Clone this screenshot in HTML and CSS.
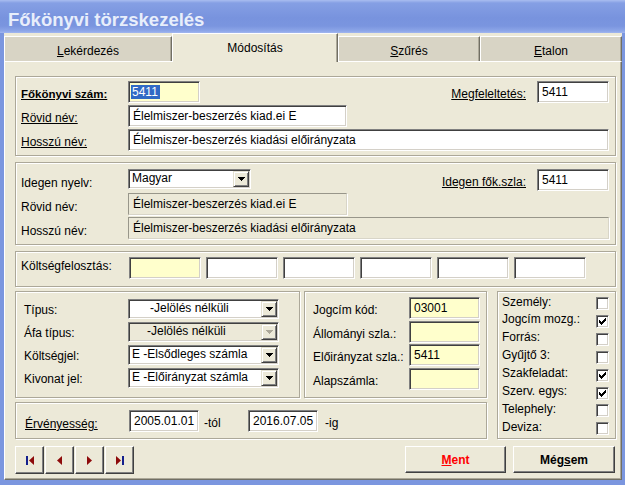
FILE: index.html
```html
<!DOCTYPE html>
<html>
<head>
<meta charset="utf-8">
<link rel="stylesheet" href="styles.css">
</head>
<body>
<div class="window">
  <div class="titlebar">Főkönyvi törzskezelés</div>
  <div class="client">
    <div class="tabs">
      <div class="tab t1"><u>L</u>ekérdezés</div>
      <div class="tab t2 active">Módosítás</div>
      <div class="tab t3"><u>S</u>zűrés</div>
      <div class="tab t4"><u>E</u>talon</div>
    </div>
    <div class="panel">
      <div class="group g1">
        <div class="row">
          <span class="lbl bold u">Főkönyvi szám:</span>
          <div class="field yellow w72"><span class="selected">5411</span></div>
          <span class="fill"></span>
          <span class="rlbl u">Megfeleltetés:</span>
          <div class="field w72">5411</div>
        </div>
        <div class="row">
          <span class="lbl u">Rövid név:</span>
          <div class="field w219">Élelmiszer-beszerzés kiad.ei E</div>
        </div>
        <div class="row">
          <span class="lbl u">Hosszú név:</span>
          <div class="field grow">Élelmiszer-beszerzés kiadási előirányzata</div>
        </div>
      </div>

      <div class="group g2">
        <div class="row">
          <span class="lbl lo">Idegen nyelv:</span>
          <div class="combo w123"><span class="ctext">Magyar</span><span class="cbtn"><svg width="7" height="4" viewBox="0 0 7 4"><path d="M0 0H7V1H6V2H5V3H4V4H3V3H2V2H1V1H0Z" fill="#000"/></svg></span></div>
          <span class="fill"></span>
          <span class="rlbl u">Idegen fők.szla:</span>
          <div class="field w72">5411</div>
        </div>
        <div class="row">
          <span class="lbl lo">Rövid név:</span>
          <div class="field disabled w219">Élelmiszer-beszerzés kiad.ei E</div>
        </div>
        <div class="row">
          <span class="lbl lo">Hosszú név:</span>
          <div class="field disabled grow">Élelmiszer-beszerzés kiadási előirányzata</div>
        </div>
      </div>

      <div class="group g3">
        <div class="row">
          <span class="lbl hi">Költségfelosztás:</span>
          <div class="costs">
            <div class="field yellow"></div>
            <div class="field"></div>
            <div class="field"></div>
            <div class="field"></div>
            <div class="field"></div>
            <div class="field"></div>
          </div>
        </div>
      </div>

      <div class="lower">
        <div class="group g4">
          <div class="row">
            <span class="lbl">Típus:</span>
            <div class="combo w151"><span class="ctext ind22">-Jelölés nélküli</span><span class="cbtn"><svg width="7" height="4" viewBox="0 0 7 4"><path d="M0 0H7V1H6V2H5V3H4V4H3V3H2V2H1V1H0Z" fill="#000"/></svg></span></div>
          </div>
          <div class="row">
            <span class="lbl">Áfa típus:</span>
            <div class="combo disabled w151"><span class="ctext ind19">-Jelölés nélküli</span><span class="cbtn"><svg width="7" height="4" viewBox="0 0 7 4"><path d="M0 0H7V1H6V2H5V3H4V4H3V3H2V2H1V1H0Z" fill="#aca899"/></svg></span></div>
          </div>
          <div class="row">
            <span class="lbl">Költségjel:</span>
            <div class="combo w151"><span class="ctext">E -Elsődleges számla</span><span class="cbtn"><svg width="7" height="4" viewBox="0 0 7 4"><path d="M0 0H7V1H6V2H5V3H4V4H3V3H2V2H1V1H0Z" fill="#000"/></svg></span></div>
          </div>
          <div class="row">
            <span class="lbl">Kivonat jel:</span>
            <div class="combo w151"><span class="ctext">E -Előirányzat számla</span><span class="cbtn"><svg width="7" height="4" viewBox="0 0 7 4"><path d="M0 0H7V1H6V2H5V3H4V4H3V3H2V2H1V1H0Z" fill="#000"/></svg></span></div>
          </div>
        </div>

        <div class="group g5">
          <div class="row">
            <span class="lbl">Jogcím kód:</span>
            <div class="field yellow w71">03001</div>
          </div>
          <div class="row">
            <span class="lbl">Állományi szla.:</span>
            <div class="field yellow w71"></div>
          </div>
          <div class="row">
            <span class="lbl">Előirányzat szla.:</span>
            <div class="field yellow w71">5411</div>
          </div>
          <div class="row">
            <span class="lbl">Alapszámla:</span>
            <div class="field yellow w71"></div>
          </div>
        </div>

        <div class="group g6">
          <div class="cbrow"><span>Személy:</span><span class="cb"></span></div>
          <div class="cbrow"><span>Jogcím mozg.:</span><span class="cb"><svg width="7" height="7" viewBox="0 0 7 7"><path d="M6 0h1v1h-1zM5 1h2v1h-2zM0 2h1v1h-1zM4 2h3v1h-3zM0 3h2v1h-2zM3 3h3v1h-3zM0 4h5v1h-5zM1 5h3v1h-3zM2 6h1v1h-1z" fill="#000"/></svg></span></div>
          <div class="cbrow"><span>Forrás:</span><span class="cb"></span></div>
          <div class="cbrow"><span>Gyűjtő 3:</span><span class="cb"></span></div>
          <div class="cbrow"><span>Szakfeladat:</span><span class="cb"><svg width="7" height="7" viewBox="0 0 7 7"><path d="M6 0h1v1h-1zM5 1h2v1h-2zM0 2h1v1h-1zM4 2h3v1h-3zM0 3h2v1h-2zM3 3h3v1h-3zM0 4h5v1h-5zM1 5h3v1h-3zM2 6h1v1h-1z" fill="#000"/></svg></span></div>
          <div class="cbrow"><span>Szerv. egys:</span><span class="cb"><svg width="7" height="7" viewBox="0 0 7 7"><path d="M6 0h1v1h-1zM5 1h2v1h-2zM0 2h1v1h-1zM4 2h3v1h-3zM0 3h2v1h-2zM3 3h3v1h-3zM0 4h5v1h-5zM1 5h3v1h-3zM2 6h1v1h-1z" fill="#000"/></svg></span></div>
          <div class="cbrow"><span>Telephely:</span><span class="cb"></span></div>
          <div class="cbrow"><span>Deviza:</span><span class="cb"></span></div>
        </div>

        <div class="group g7">
          <div class="row">
            <span class="lbl lo u">Érvényesség:</span>
            <div class="field w70">2005.01.01</div>
            <span class="suffix">-tól</span>
            <div class="field w70">2016.07.05</div>
            <span class="suffix2">-ig</span>
          </div>
        </div>
      </div>

      <div class="bottom">
        <div class="nav">
          <div class="btn nbtn"><svg width="8" height="9" viewBox="0 0 8 9"><rect x="0" y="0" width="2" height="9" fill="#14208c"/><path d="M8 0V9L3 4.5Z" fill="#8e0b0b"/></svg></div>
          <div class="btn nbtn"><svg width="5" height="9" viewBox="0 0 5 9"><path d="M5 0V9L0 4.5Z" fill="#8e0b0b"/></svg></div>
          <div class="btn nbtn"><svg width="5" height="9" viewBox="0 0 5 9"><path d="M0 0V9L5 4.5Z" fill="#8e0b0b"/></svg></div>
          <div class="btn nbtn"><svg width="8" height="9" viewBox="0 0 8 9"><path d="M0 0V9L5 4.5Z" fill="#8e0b0b"/><rect x="6" y="0" width="2" height="9" fill="#14208c"/></svg></div>
        </div>
        <span class="fill"></span>
        <div class="btn cmd ment"><u>M</u>ent</div>
        <div class="btn cmd megsem">Még<u>s</u>em</div>
      </div>
    </div>
  </div>
</div>
</body>
</html>
```

FILE: styles.css
```css
body {
  margin: 0;
  font-family: "Liberation Sans", Arial, sans-serif;
  font-size: 12px;
  color: #000;
}

.window {
  width: 625px;
  height: 485px;
  background: #7b96df;
  display: flex;
  flex-direction: column;
  overflow: hidden;
}

.titlebar {
  height: 33px;
  box-sizing: border-box;
  padding: 10px 0 0 8px;
  font-weight: bold;
  font-size: 18.5px;
  line-height: 20px;
  color: #e8eefb;
  background: linear-gradient(to bottom, #a9bdf0 0, #859fe4 3px, #7893de 18px, #7a95df 26px, #8da6e8 31px, #a2b7ef 33px);
}

.client {
  margin: 0 3px 5px 4px;
  height: 447px;
  background: #ece9d8;
  display: flex;
  flex-direction: column;
}

.tabs {
  display: flex;
  height: 28px;
  align-items: flex-end;
  position: relative;
  z-index: 1;
}

.tab {
  box-sizing: border-box;
  height: 25px;
  padding-top: 7px;
  line-height: 14px;
  text-align: center;
  background: #d8d4c5;
  border-top: 1px solid #fff;
  border-left: 1px solid #fff;
  border-right: 1px solid #716f64;
  box-shadow: inset -1px 0 #aca899;
}

.t1 { width: 168px; }
.t2 { width: 166px; }
.t3 { width: 142px; }
.t4 { width: 142px; }

.tab.active {
  height: 29px;
  margin-bottom: -1px;
  background: #ece9d8;
}

.panel {
  flex: 1;
  box-sizing: border-box;
  border-top: 1px solid #fff;
  border-left: 1px solid #fff;
  border-right: 1px solid #716f64;
  border-bottom: 1px solid #716f64;
  box-shadow: inset -1px -1px #aca899;
  padding: 14px 5px 5px 10px;
  display: flex;
  flex-direction: column;
}

.group {
  box-sizing: border-box;
  border: 1px solid #aca899;
  box-shadow: inset 1px 1px #fff, 1px 1px #fff;
}

.row {
  display: flex;
  align-items: flex-start;
}

.fill { flex: 1; }

.lbl {
  flex: none;
  line-height: 14px;
  padding-top: 6px;
}
.lbl.lo { padding-top: 7px; }
.lbl.hi { padding-top: 0; }
.bold { font-weight: bold; font-size: 11.5px; }
.u { text-decoration: underline; }

.rlbl {
  line-height: 14px;
  padding-top: 6px;
  margin-right: 11px;
}

.field {
  box-sizing: border-box;
  height: 22px;
  line-height: 20px;
  padding-left: 4px;
  background: #fff;
  border: 1px solid;
  border-color: #808080 #fff #fff #808080;
  box-shadow: inset 1px 1px #404040, inset -1px -1px #d4d0c8;
  white-space: nowrap;
  overflow: hidden;
  flex: none;
}
.field.yellow { background: #ffffcc; }
.field.disabled {
  background: #ece9d8;
  border-color: #98968a #d8d5c8 #d8d5c8 #98968a;
  box-shadow: 1px 1px #fff;
}
.selected {
  background: #316ac5;
  color: #fff;
  padding: 0 2px 0 1px;
  margin-left: -2px;
}

.w70 { width: 70px; }
.w71 { width: 71px; }
.w72 { width: 72px; }
.w123 { width: 123px; }
.w151 { width: 151px; }
.w219 { width: 219px; }
.grow { flex: 1; }

.combo {
  box-sizing: border-box;
  height: 20px;
  display: flex;
  background: #fff;
  border: 1px solid;
  border-color: #808080 #fff #fff #808080;
  box-shadow: inset 1px 1px #404040, inset -1px -1px #d4d0c8;
  flex: none;
}
.combo.disabled { background: #ece9d8; }
.ctext {
  flex: 1;
  line-height: 15px;
  padding-left: 3px;
  padding-top: 1px;
  white-space: nowrap;
}
.ctext.ind22 { padding-left: 21px; }
.ctext.ind19 { padding-left: 18px; }
.cbtn {
  box-sizing: border-box;
  width: 16px;
  height: 16px;
  margin: 1px 1px 0 0;
  background: #ece9d8;
  border: 1px solid;
  border-color: #e3e0d0 #404040 #404040 #e3e0d0;
  box-shadow: inset 1px 1px #fff, inset -1px -1px #808080;
  display: flex;
  align-items: center;
  justify-content: center;
}

.g1 { height: 80px; padding: 4px 6px 0 5px; }
.g1 .row + .row { margin-top: 2px; }
.g1 .lbl { width: 107px; }

.g2 { height: 83px; margin-top: 6px; padding: 6px 6px 0 5px; }
.g2 .row + .row { margin-top: 2px; }
.g2 .lbl { width: 107px; }

.g3 { height: 36px; margin-top: 6px; padding: 5px 6px 0 5px; }
.g3 .lbl { width: 108px; padding-top: 2px; }
.costs {
  display: flex;
  gap: 5.5px;
}
.costs .field { width: 71.5px; }

.lower {
  display: grid;
  grid-template-columns: 285px 183px 1fr;
  grid-template-rows: 107px 37px;
  column-gap: 4px;
  row-gap: 4px;
  margin-top: 4px;
}

.g4 { grid-column: 1; grid-row: 1; padding: 7px 0 0 8px; }
.g4 .row + .row { margin-top: 3px; }
.g4 .lbl { width: 104px; padding-top: 4px; }

.g5 { grid-column: 2; grid-row: 1; padding: 5px 0 0 8px; }
.g5 .row + .row { margin-top: 1.5px; }
.g5 .lbl { width: 96px; padding-top: 6px; }

.g6 {
  grid-column: 3;
  grid-row: 1 / span 2;
  margin-left: 6px;
  padding: 2.5px 6px 0 4px;
}
.cbrow {
  display: flex;
  height: 17.86px;
  line-height: 14px;
}
.cbrow span:first-child { flex: 1; }
.cb {
  box-sizing: border-box;
  width: 13px;
  height: 13px;
  margin-top: 2.8px;
  background: #fff;
  border: 1px solid;
  border-color: #808080 #fff #fff #808080;
  box-shadow: inset 1px 1px #404040, inset -1px -1px #d4d0c8;
  display: flex;
  align-items: center;
  justify-content: center;
}

.g7 { grid-column: 1 / span 2; grid-row: 2; padding: 7px 0 0 9px; }
.g7 .lbl { width: 104px; }
.suffix {
  width: 49px;
  box-sizing: border-box;
  padding: 6px 0 0 5px;
  line-height: 14px;
}
.suffix2 {
  padding: 6px 0 0 7px;
  line-height: 14px;
}

.bottom {
  display: flex;
  align-items: flex-start;
  margin-top: 7px;
  padding-right: 1px;
}
.nav { display: flex; gap: 1px; }

.btn {
  box-sizing: border-box;
  background: #ece9d8;
  border: 1px solid;
  border-color: #fff #404040 #404040 #fff;
  box-shadow: inset -1px -1px #808080;
  display: flex;
  align-items: center;
  justify-content: center;
}
.nbtn { width: 29px; height: 28px; }
.cmd {
  height: 27px;
  font-weight: bold;
  line-height: 14px;
}
.ment { width: 101px; color: #ff0000; margin-right: 7px; }
.megsem { width: 102px; }
```
